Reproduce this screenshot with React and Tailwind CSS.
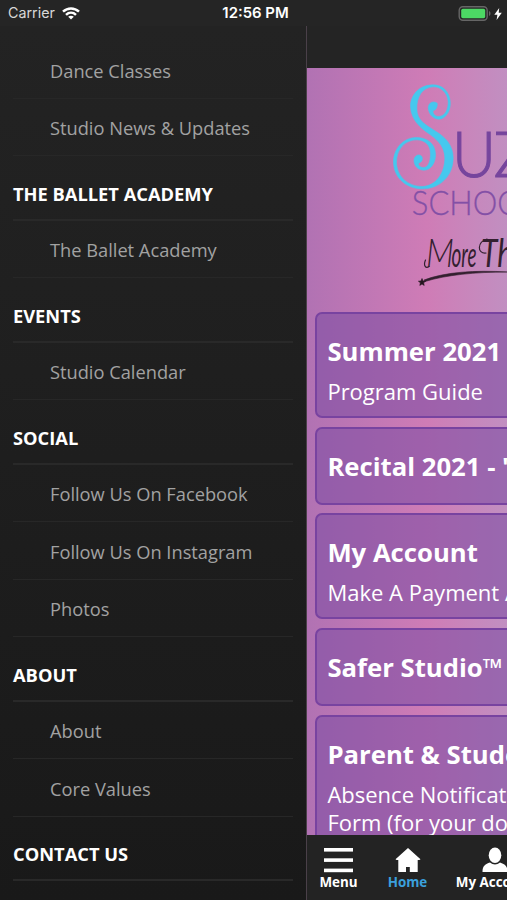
import React from 'react';

const menuRows = [
  { type: 'item', label: 'Dance Classes' },
  { type: 'item', label: 'Studio News & Updates' },
  { type: 'header', label: 'THE BALLET ACADEMY' },
  { type: 'item', label: 'The Ballet Academy' },
  { type: 'header', label: 'EVENTS' },
  { type: 'item', label: 'Studio Calendar' },
  { type: 'header', label: 'SOCIAL' },
  { type: 'item', label: 'Follow Us On Facebook' },
  { type: 'item', label: 'Follow Us On Instagram' },
  { type: 'item', label: 'Photos' },
  { type: 'header', label: 'ABOUT' },
  { type: 'item', label: 'About' },
  { type: 'item', label: 'Core Values' },
  { type: 'header', label: 'CONTACT US' },
];

const cards = [
  { title: 'Summer 2021', lines: ['Program Guide'] },
  { title: 'Recital 2021 - "', lines: [] },
  { title: 'My Account', lines: ['Make A Payment A'] },
  { title: 'Safer Studio™', lines: [] },
  { title: 'Parent & Student', lines: ['Absence Notification', 'Form (for your door'] },
];

function StatusBar() {
  return (
    <div className="flex h-[26px] shrink-0 items-center bg-[#252525] pl-2 pr-[5px] pt-px font-['Inter',sans-serif] text-white">
      <div className="flex flex-1 items-center gap-[7px]">
        <span className="text-[14.3px] leading-none text-[#d8d8d8]">Carrier</span>
        <svg width="18" height="13" viewBox="0 0 18 13" fill="none" stroke="#fff" strokeWidth="2.5">
          <path d="M1 4.6C5.6 0.3 12.4 0.3 17 4.6" />
          <path d="M4 7.8C6.9 5.1 11.1 5.1 14 7.8" />
          <path d="M9 12.6L6.2 9.8C7.8 8.4 10.2 8.4 11.8 9.8Z" fill="#fff" stroke="none" />
        </svg>
      </div>
      <span className="pl-px text-[14.9px] leading-none font-semibold">12:56 PM</span>
      <div className="flex flex-1 items-center justify-end gap-[3px]">
        <svg width="33" height="15" viewBox="0 0 33 15" fill="none">
          <rect x="1.2" y="0.8" width="28" height="13.4" rx="3.6" stroke="#666" strokeWidth="1.4" />
          <rect x="3.2" y="2.8" width="24" height="9.4" rx="1.6" fill="#4cd964" />
          <path d="M31 5C33 5.8 33 9.2 31 10Z" fill="#666" />
        </svg>
        <svg width="8" height="12" viewBox="0 0 8 12" fill="#fff">
          <path d="M5.2 0L0.3 6.8H3.4L2.6 12L7.8 4.8H4.7Z" />
        </svg>
      </div>
    </div>
  );
}

function MenuRow({ type, label }) {
  if (type === 'header') {
    return (
      <div className="flex h-[64.5px] items-center border-b-2 border-[#292929] pt-[12.5px] text-[18.3px] font-bold text-white">
        {label}
      </div>
    );
  }
  return (
    <div className="flex h-[57.5px] items-center border-b border-[#272727] pl-[37px] pt-[2.5px] text-[18.25px] text-[#a2a2a2]">
      {label}
    </div>
  );
}

function Banner() {
  return (
    <svg className="block h-[244px] w-[200px] shrink-0" viewBox="7 -2 200 244">
      <g transform="translate(0.5 0.5) scale(0.33333)">
        <path
          fill="#45c8ee"
          stroke="#45c8ee"
          strokeWidth="1.8"
          d="M410 98C395 88 380 100 384 118C388 135 400 146 416 146C438 144 452 118 449 92C446 62 425 42 395 43C355 44 330 75 330 108C332 150 360 172 390 193C415 212 432 230 433 262C433 310 405 347 365 348C320 348 288 315 288 275C288 235 315 207 350 208C375 209 390 225 390 250C390 275 382 291 370 291C358 292 350 282 356 277C364 275 368 266 364 258C358 250 345 252 341 265C338 285 352 299 370 299C393 299 406 275 405 250C404 220 380 201 348 201C308 201 279 235 279 275C280 320 315 354 365 355C420 355 458 315 458 262C458 225 435 200 405 182C375 163 349 150 349 115C348 80 365 50 398 49C422 48 441 68 443 92C444 115 435 136 416 138C403 138 396 130 398 120C405 120 412 110 410 98Z"
        />
      </g>
      <g fill="#76459d" stroke="#76459d" strokeWidth="1.1" fontFamily="Lato, sans-serif" fontSize="64" fontWeight="300">
        <text x="152" y="106.5" textLength="44" lengthAdjust="spacingAndGlyphs">
          U
        </text>
        <text x="193.5" y="106.5">
          Z
        </text>
      </g>
      <text x="111.8" y="144.7" fill="#8350a6" stroke="#8350a6" strokeWidth="0.3" fontFamily="Lato, sans-serif" fontSize="33" fontWeight="300" textLength="110" lengthAdjust="spacingAndGlyphs">
        SCHOO
      </text>
      <g fill="#33202f" fontFamily="Lato, sans-serif" fontStyle="italic">
        <text x="126" y="197" fontSize="39" fontWeight="300" textLength="28" lengthAdjust="spacingAndGlyphs">
          M
        </text>
        <text x="151.5" y="197" fontSize="34" textLength="25" lengthAdjust="spacingAndGlyphs">
          ore
        </text>
        <text x="181" y="197" fontSize="39" textLength="32" lengthAdjust="spacingAndGlyphs">
          Th
        </text>
      </g>
      <g fill="none" stroke="#33202f" strokeWidth="1.2" strokeLinecap="round">
        <path d="M125.5 190C123 196 126 199 129 196.5" />
        <path d="M186 183C177 184 177 172 187 169" />
      </g>
      <path d="M124 210C145 202 175 200 208 202C175 202 146 205 125 211.5Z" fill="#33202f" stroke="#33202f" strokeWidth="0.6" />
      <path d="M122 208.5L123 211L125.6 211.2L123.6 212.8L124.2 215.4L122 214L119.8 215.4L120.4 212.8L118.4 211.2L121 211Z" fill="#24151f" stroke="#24151f" strokeWidth="0.6" />
    </svg>
  );
}

function Card({ title, lines }) {
  return (
    <div className="w-[330px] shrink-0 rounded-[7px] border-2 border-[#7843a0] bg-[#7f4fa4]/60 px-[10px] pb-[10px] pt-[19px] text-white">
      <h2 className="h-[44px] whitespace-nowrap text-[25.7px] leading-[37px] font-bold">{title}</h2>
      {lines.map((line) => (
        <p key={line} className="h-[28px] whitespace-nowrap text-[22px] leading-[28px]">
          {line}
        </p>
      ))}
      <div className="h-px" />
    </div>
  );
}

function TabBar() {
  return (
    <nav className="-ml-px flex h-[65px] w-[280px] shrink-0 bg-[#232323] pt-[12px] text-center text-[13.4px] leading-[19px] font-bold text-white">
      <div className="flex w-[65px] flex-col items-center">
        <svg width="29" height="26" viewBox="0 0 29 26" fill="#fff">
          <rect y="1" width="29" height="3.6" />
          <rect y="11.3" width="29" height="3.6" />
          <rect y="21.6" width="29" height="3.6" />
        </svg>
        Menu
      </div>
      <div className="flex w-[73px] flex-col items-center text-[#3ba0dc]">
        <svg width="26" height="26" viewBox="0 0 26 26" fill="#fff">
          <path d="M13 1L0.5 12.2L1.6 13H3.3V25H11V20H14.8V25H22.7V13H24.4L25.5 12.2Z" />
        </svg>
        Home
      </div>
      <div className="flex w-[102px] flex-col items-center">
        <svg width="26" height="26" viewBox="0 0 26 26" fill="#fff">
          <ellipse cx="13" cy="8.3" rx="6.3" ry="7.8" />
          <path d="M0.5 25C0.5 18.5 3.5 17 8 15.5C11 18 15 18 18 15.5C22.5 17 25.5 18.5 25.5 25Z" />
        </svg>
        <span className="whitespace-nowrap">My Account</span>
      </div>
    </nav>
  );
}

export default function App() {
  return (
    <div className="flex h-[900px] w-[507px] flex-col overflow-hidden bg-[#252525] font-['Open_Sans',sans-serif]">
      <StatusBar />
      <div className="flex min-h-0 flex-1">
        <aside className="w-[306px] shrink-0 overflow-hidden bg-gradient-to-b from-[#232323] to-[#191919] pl-[13px] pr-[13px] pt-[15px]">
          {menuRows.map((row, index) => (
            <MenuRow key={index} type={row.type} label={row.label} />
          ))}
        </aside>
        <main className="flex min-w-0 flex-1 flex-col overflow-hidden border-l border-[#4a4049]">
          <div className="h-[42px] shrink-0 bg-[#242424]" />
          <div className="flex min-h-0 flex-1 flex-col overflow-hidden bg-gradient-to-r from-[#b172b3] via-[#cf7cb6] via-60% to-[#c18fc1]">
            <Banner />
            <div className="flex flex-col gap-[8.67px] pl-[8.4px]">
              {cards.map((card) => (
                <Card key={card.title} title={card.title} lines={card.lines} />
              ))}
            </div>
          </div>
          <TabBar />
        </main>
      </div>
    </div>
  );
}
